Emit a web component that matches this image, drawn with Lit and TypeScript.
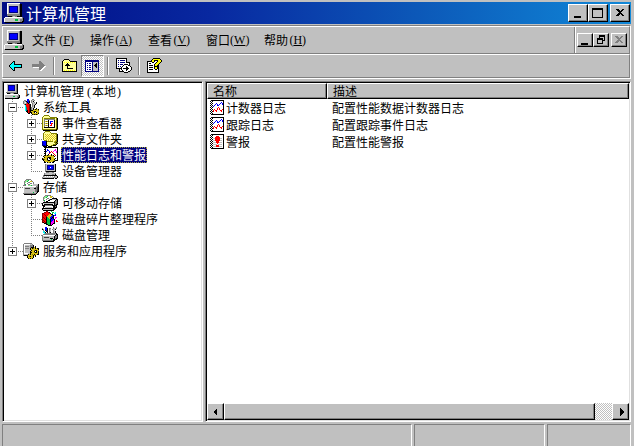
import { LitElement, html, svg, css, nothing } from "lit";
import { customElement } from "lit/decorators.js";
import { classMap } from "lit/directives/class-map.js";

const PALETTE: Record<string, string> = {
  k: "#000000", w: "#ffffff", g: "#808080", l: "#c0c0c0", b: "#0000ff", n: "#000080",
  y: "#ffff00", Y: "#ffff99", o: "#808000", c: "#00ffff", t: "#008080", r: "#ff0000",
  R: "#800000", e: "#00c040", E: "#90e890", m: "#ff00ff", d: "#404040", a: "#d8c018",
};

/* Icons are kept as pixel rows, one palette letter per pixel. */
const ICONS: Record<string, string[]> = {
  computer: [
    "..wwwwwwwwwww...",
    "..wlllllllllgk..",
    "..wlnnnnnnnlgk..",
    "..wlnbbbbbnlgk..",
    "..wlnbbbbbnlgk..",
    "..wlnbbbbbnlgk..",
    "..wlnbbbbbnlgk..",
    "..wlnnnnnnnlgk..",
    "..wlllllllllgk..",
    "..gggggggggggk..",
    "...kkkgllgkkkk..",
    ".wwwwwwwwwwwwwg.",
    "wlllllllllllllgk",
    "wlllllllleellggk",
    "wllllllllllllgkk",
    ".kkkkkkkkkkkkkk.",
  ],
  tools: [
    "....bb...gg.....",
    ".gg.bbg.gllg....",
    "glgkbbk.glk.....",
    "gl.gkbk.gllg.k..",
    "gllgrkg..glllk..",
    ".gkrrrRk.gllk...",
    "..crrrRk.glk....",
    "..crrrRk.glk....",
    "..ctrrRkgllk....",
    "..ctrrRkglk..k..",
    "..ctrrRkglkakoak",
    "..ctkrRkkkaaaaao",
    "...kkrRkaaokkaaa",
    "....krRkkaak.kao",
    ".....kk.kaaaaaak",
    ".........kokoko.",
  ],
  events: [
    "..ooooo.........",
    ".oYYYYYo........",
    "oYYYYYYYooooooo.",
    "oYoooooooooooYok",
    "oYgggggggggggYok",
    "oYgwwwkwwwwwkYok",
    "oYgaoakwbbbwkYok",
    "oYgwwwkwbwwwkYok",
    "oYgaoakwbrrwkYok",
    "oYgwwwkwwrwwkYok",
    "oYgaoakwrrwwkYok",
    "oYgwwwkwwwwwkYok",
    "oYkkkkkkkkkkkYok",
    "oYYYYYYYYYYYYYok",
    "ooooooooooooooko",
    ".kkkkkkkkkkkkkk.",
  ],
  shared: [
    "...ooooo........",
    "..oYYYYYo.......",
    ".oYYYYYYYoooooo.",
    ".oYaYaYaYaYaYaok",
    ".oYYaYaYaYaYaYok",
    ".oYaYaYaYaYaYaok",
    ".oYYaYaYaYaYaYok",
    ".oYaYaYaYaYaYaok",
    ".oYYaYaYaYaYaYok",
    "..oooYaYaYaYYaok",
    "bbbbkooooooYaook",
    "nbbbkYYYYYYYooko",
    "nbbbkYYYYYYYYook",
    "nbbbkYYYYYYoook.",
    "nnnbkkYYYookkk..",
    ".kkkk.kkkk......",
  ],
  perf: [
    "..kkkkkkkkkkkkkk",
    "...kwwwwwwwwwwwk",
    "..kkwbwwwwwwwmwk",
    "...kwbbwwwwwmmwk",
    "..kkbwwbwrwmwwmk",
    "...kwwwbrwrwwwmk",
    "..kkwwwrwwwrwwwk",
    "...kwwkwwkwwrwwk",
    "..kkakoaakakwrwk",
    ".kaaaaaaaaaakwwk",
    "..kaaokkkaaawwwk",
    "kaaaak.kkaaaakwk",
    "kkoaak..kaaakwwk",
    ".kaaaokkaaaaokkk",
    "..kaaaaaaaakk...",
    "..kk.kaok.kk....",
  ],
  device: [
    "...wwwwwwwwwww..",
    "...glllllllllk..",
    "...glnnnnnnnlk..",
    "...glnbbbbbnlk..",
    "...glnbbwbbnlk..",
    "...glnbbbbbnlk..",
    "...glnnnnnnnlk..",
    "...glllllllllk..",
    "...gkkkkkkkkkk..",
    "....ggglllgg....",
    "..gllllllllllg..",
    "..glllllllgglk..",
    ".gkkkkkkkkkkkkk.",
    ".glwlwlwlwlwgllk",
    "gllllllllllggllk",
    "gkkkkkkkkkkk.kk.",
  ],
  storage: [
    "...ggggg........",
    "..gEEewwg.......",
    ".gEEewwaag......",
    ".gEwwggwwwg.....",
    ".gwwgwwggwgwwww.",
    ".gewwggwwwlllllk",
    "gggwwEEEelllllgk",
    "wwwwwwwwwwwwwggk",
    "wlllllllllllggdk",
    "wldddddllllkkgdk",
    "wlllllllllllggdk",
    "wlllllllllllggdk",
    "wlllllllllllggkk",
    "wlllllllllellgk.",
    "gggggggggggggk..",
    ".kkkkkkkkkkkk...",
  ],
  removable: [
    "...gggggg.......",
    "..gEEewwaag.....",
    ".gEEewwwaawg....",
    ".gEwwggwwwkkkkk.",
    ".gwwgwwgkkllllkk",
    ".gewwwkkwwwwwkgk",
    "..gwkkwwwwwwkggk",
    ".kkkkkkkkkkkkggk",
    "klllllllllllkggk",
    "kwkkkkkkkkkwkgkk",
    "kkkgggggggkkkkk.",
    ".kkwwwwwwwwkkgk.",
    ".kwlllllllwkkkk.",
    "kkkkkkkkkkkkkk..",
    "kllllllllllkk...",
    ".kkkkkkkkkkk....",
  ],
  defrag: [
    "....RR...e......",
    "..RRrrRk..ee.c..",
    "RRrrrrrrk.e.cc..",
    "RrRrrrraakk..b..",
    "RrrRrraaaabkbb..",
    "RrrrRaaaabbk....",
    "RRrrkeaabbkk.mm.",
    "RrRrkeeabkbk.m..",
    "RrrRkeeekbbbk...",
    "RRrrkeeekbbmk.r.",
    "RrRrkeeekbmmk.rr",
    "RkrRkeeekmmmk...",
    "..kkkeeekmmkk...",
    "....kkeekmk.....",
    "......kkkk......",
    "................",
  ],
  disk: [
    "...bb......g..g.",
    "g..bbk.gg..gllg.",
    "kg.bbk.gl.gllk..",
    ".g.kbk.gl..gl...",
    ".cg.kk.gl..glk..",
    ".cck.k.gk..glk..",
    "..cgggggggggggk.",
    ".gggggggggggglkk",
    "gwwwwwwwwwwwwkgk",
    "glllllllllllkggk",
    "gldddddlllllkggk",
    "glllllllkkklkgkk",
    "gllllllllelkkkk.",
    "gggggggggggkk...",
    ".kkkkkkkkkkk....",
    "................",
  ],
  services: [
    ".gggggggg.......",
    "gwwwwwwllg......",
    "gwlllllgggk.....",
    "gwgggglgggk.k...",
    "gwlllllgkkkak...",
    "gwgggglkakoakakk",
    "gwlllllkaaaaaaak",
    "gwllllllkaaokkaa",
    "gwlllllkaaak.kak",
    "gwlllllkkaaokkak",
    "gwwwwllkaaaaaaak",
    "gllllkakaoakaakk",
    "gkkkkaaaaakak...",
    "....kaokaak.k...",
    "....kaaaaak.....",
    ".....kakak......",
  ],
  log: [
    ".kkkkkkkkkkkkk..",
    "k.kwwwwwwwwwwk..",
    ".kwwwwwwwwwbwk..",
    "k.kwwwbwwwbwbk..",
    ".kwwwbwbwbwwbk..",
    "k.kwbwwbbwwwwk..",
    ".kwbwwwwwwwwwk..",
    "k.kwwwwwrwwwwk..",
    ".kwwwwwrwrwwwk..",
    "k.kwrwwrwrwwrk..",
    ".kwrwrrwwwrrwk..",
    "k.krwwrwwwwrwk..",
    ".kwwwwwwwwwwwk..",
    "k.kwwwwwwwwwwk..",
    ".kkkkkkkkkkkkk..",
  ],
  alert: [
    ".kkkkkkkkkkkkk..",
    "k.kwwwwwwwwwwk..",
    ".kwwwwrrrwwwwk..",
    "k.kwwrrrrrwwwk..",
    ".kwllrrrrrllwk..",
    "k.kwwrrrrrwwwk..",
    ".kwllrrrrrllwk..",
    "k.kwwwrrrwwwwk..",
    ".kwlllrrrlllwk..",
    "k.kwwwwrwwwwwk..",
    ".kwllllwllllwk..",
    "k.kwwwrrrwwwwk..",
    ".kwlllrrrlllwk..",
    "k.kwwwwwwwwwwk..",
    ".kkkkkkkkkkkkk..",
  ],
  back: [
    "................",
    "................",
    "................",
    ".....kk.........",
    "....kck.........",
    "...kcck.........",
    "..kccckkkkkkkk..",
    ".kccccccccccck..",
    ".kccccccccccck..",
    "..kccckkkkkkkk..",
    "...kcck.........",
    "....kck.........",
    ".....kk.........",
  ],
  forward: [
    "................",
    "................",
    "................",
    "........gg......",
    "........ggg.....",
    "........gggg....",
    ".gggggggggggg...",
    ".ggggggggggggg..",
    ".ggggggggggggww.",
    "..wwwwwwggggww..",
    "........gggww...",
    "........ggww....",
    ".........ww.....",
  ],
  up: [
    "................",
    "..kkkkk.........",
    ".kYYYYYk........",
    "kYYYYYYYkkkkkkk.",
    "kYyYyYyYyYyYyYk.",
    "kYYYYkYYYYYYYYk.",
    "kYYYkkkYYYYYYYk.",
    "kYYkkkkkYYYYYYk.",
    "kYYYYkYYYYYYYYk.",
    "kYYYYkYYYYYYYYk.",
    "kYYYYkkkkkkYYYk.",
    "kYYYYYYYYYYYYYk.",
    "kYyYyYyYyYyYyYk.",
    "kkkkkkkkkkkkkkk.",
  ],
  panel: [
    "................",
    "................",
    "nnnnnnnnnnnnnn..",
    "nnnnnnnnnnnnnn..",
    "nwwwwwwnllllln..",
    "nwnwnnwnlllkln..",
    "nwwwwwwnllkkln..",
    "nwnwnnwnlkkkln..",
    "nwwwwwwnllkkln..",
    "nwnwnnwnlllkln..",
    "nwwwwwwnllllln..",
    "nwnwnnwnllllln..",
    "nwwwwwwnllllln..",
    "nnnnnnnnnnnnnn..",
  ],
  export: [
    "kkkkkkkkkkk.....",
    "kwwwwwwwwwk.....",
    "kwnwnnnnnwk.....",
    "kwwwwwwwwwk.....",
    "kwnwnnnnnwkkkk..",
    "kwwwwwwwwwwwwk..",
    "kwnwnnnwkkkkwk..",
    "kwwwwwwkwwwwkk..",
    "kwnwnwkwwwkwwwk.",
    "kwwwwkwwwwkkwwwk",
    "kkkkkkwkkkkkkwwk",
    "...kwkwwwwkkwwwk",
    "...kwwkwwwkwwwk.",
    "...kkkkkwwwwkk..",
    "........kkkk....",
  ],
  help: [
    "......kkkkkkk...",
    ".....kyyyyyyyk..",
    "....kyykkkkyyyk.",
    "kkkkkyykwwkyyyk.",
    "kwwwwkkwwkyyyk..",
    "kwkkwwwwkyyyk...",
    "kwwwwwwkyyyk....",
    "kwkkkkwkyykk....",
    "kwwwwwwkkkkk....",
    "kwkkkkwkyykk....",
    "kwwwwwwkyykk....",
    "kwkkkkwwkkwk....",
    "kwwwwwwwwwwk....",
    "kwwwwwwwwwwk....",
    "kkkkkkkkkkkk....",
  ],
};

function icon(name: string, cls = "icon") {
  const paths: Record<string, string> = {};
  ICONS[name].forEach((row, y) => {
    [...row].forEach((ch, x) => {
      if (ch !== ".") paths[ch] = (paths[ch] ?? "") + `M${x} ${y}h1v1h-1z`;
    });
  });
  return html`<svg class=${cls} viewBox="0 0 16 16" shape-rendering="crispEdges" aria-hidden="true">
    ${Object.entries(paths).map(([ch, d]) => svg`<path fill=${PALETTE[ch] ?? "none"} d=${d}></path>`)}
  </svg>`;
}

const GLYPHS: Record<string, string> = {
  min: "M2 9h7v2h-7z",
  max: "M0 1h11v10h-11zM1 3v7h9v-7z",
  restore: "M4 1h6v6h-2v3h-6v-6h2zM5 3v1h3v2h1v-3zM3 6v3h4v-3z",
  close: "M2 2h2l2 2l2-2h2l-3 3.500l3 3.500h-2l-2-2l-2 2h-2l3-3.500z",
  left: "M7 2v8l-4-4z",
  right: "M5 2v8l4-4z",
};

function glyph(name: string) {
  return html`<svg class="glyph" viewBox="0 0 12 12" shape-rendering="crispEdges" aria-hidden="true">
    <path fill="currentColor" fill-rule="evenodd" d=${GLYPHS[name]}></path>
  </svg>`;
}

type Guide = "tee" | "end" | "bar" | "none";
interface TreeRow {
  label: unknown;
  icon: string;
  guides: Guide[];
  box?: "plus" | "minus";
  selected?: boolean;
}

const TREE: TreeRow[] = [
  { label: html`计算机管理<span class="open">(</span>本地<span class="shut">)</span>`, icon: "computer", guides: [] },
  { label: "系统工具", icon: "tools", guides: ["tee"], box: "minus" },
  { label: "事件查看器", icon: "events", guides: ["bar", "tee"], box: "plus" },
  { label: "共享文件夹", icon: "shared", guides: ["bar", "tee"], box: "plus" },
  { label: "性能日志和警报", icon: "perf", guides: ["bar", "tee"], box: "plus", selected: true },
  { label: "设备管理器", icon: "device", guides: ["bar", "end"] },
  { label: "存储", icon: "storage", guides: ["tee"], box: "minus" },
  { label: "可移动存储", icon: "removable", guides: ["bar", "tee"], box: "plus" },
  { label: "磁盘碎片整理程序", icon: "defrag", guides: ["bar", "tee"] },
  { label: "磁盘管理", icon: "disk", guides: ["bar", "end"] },
  { label: "服务和应用程序", icon: "services", guides: ["end"], box: "plus" },
];

const MENUS = [["文件", "F"], ["操作", "A"], ["查看", "V"], ["窗口", "W"], ["帮助", "H"]];

const ITEMS = [
  { icon: "log", name: "计数器日志", text: "配置性能数据计数器日志" },
  { icon: "log", name: "跟踪日志", text: "配置跟踪事件日志" },
  { icon: "alert", name: "警报", text: "配置性能警报" },
];

function guide(kind: Guide, box?: "plus" | "minus") {
  const lines: string[] = [];
  if (kind !== "none") lines.push(kind === "end" ? "M8.500 0V8" : "M8.500 0V16");
  if (kind === "tee" || kind === "end") lines.push("M8 8.500H19");
  const art = html`<svg class="guide" viewBox="0 0 19 16" shape-rendering="crispEdges" aria-hidden="true">
    ${lines.map((d) => svg`<path d=${d} stroke="#808080" stroke-dasharray="1 1" fill="none"></path>`)}
    ${box ? svg`<path fill="#808080" d="M4 4h9v9h-9z"></path><path fill="#fff" d="M5 5h7v7h-7z"></path>
      <path fill="#000" d=${box === "plus" ? "M6 8h5v1h-5zM8 6h1v5h-1z" : "M6 8h5v1h-5z"}></path>` : nothing}
  </svg>`;
  return box
    ? html`<button class="expander" aria-label=${box === "plus" ? "展开" : "折叠"}>${art}</button>`
    : art;
}

@customElement("app-root")
export class AppRoot extends LitElement {
  static styles = css`
    :host {
      display: flex;
      flex-direction: column;
      box-sizing: border-box;
      height: 100vh;
      padding: 2px 3px 0 2px;
      overflow: hidden;
      background: #c0c0c0;
      color: #000;
      font: 12px/16px "Noto Sans CJK SC", sans-serif;
      cursor: default;
    }
    * { box-sizing: border-box; }
    button {
      display: flex;
      align-items: center;
      justify-content: center;
      flex: none;
      margin: 0;
      padding: 0;
      border: 0;
      background: none;
      color: inherit;
      font: inherit;
    }
    svg { display: block; flex: none; }
    .icon { width: 16px; height: 16px; }
    .large { width: 20px; height: 20px; }
    .glyph { width: 12px; height: 12px; }

    .titlebar {
      display: flex;
      align-items: center;
      flex: none;
      height: 22px;
      margin-bottom: 1px;
      padding: 0 1px 0 2px;
      background: linear-gradient(to right, #000c84, #0828a0 33%, #0c58b8 66%, #1088d8);
      color: #fff;
    }
    h1 {
      flex: 1;
      margin: 0 0 0 2px;
      font-size: 16px;
      font-weight: 400;
      line-height: 20px;
    }
    .raised {
      border: 1px solid;
      border-color: #fff #000 #000 #fff;
      background: #c0c0c0;
      box-shadow: inset -1px -1px #808080;
      color: #000;
    }
    .caption { width: 20px; height: 18px; }
    .small { width: 16px; height: 14px; }
    .apart { margin-left: 2px; }
    .disabled { color: #808080; }

    .bars {
      flex: none;
      margin-bottom: 2px;
      border-top: 1px solid #808080;
      border-bottom: 1px solid #fff;
      border-right: 1px solid #fff;
    }
    .bar {
      display: flex;
      align-items: center;
      border: 1px solid;
      border-color: #fff #808080 #808080 #fff;
    }
    .menubar { height: 28px; padding-left: 1px; }
    .menus { display: flex; flex: 1; }
    .menu { padding: 0 8px; }
    .key {
      width: 18px;
      font-family: "Liberation Serif", serif;
      text-align: right;
    }
    .mdi {
      display: flex;
      align-items: center;
      align-self: stretch;
      padding: 0 2px;
      border-left: 1px solid #808080;
      box-shadow: inset 1px 0 #fff;
    }
    .toolbar { height: 24px; padding-left: 1px; }
    .tool { width: 23px; height: 22px; }
    .pressed {
      border: 1px solid;
      border-color: #808080 #fff #fff #808080;
      background: repeating-conic-gradient(#fff 0 25%, #c0c0c0 0 50%) 0 0 / 2px 2px;
    }
    .separator {
      width: 2px;
      height: 18px;
      margin: 0 3px;
      border-left: 1px solid #808080;
      border-right: 1px solid #fff;
    }

    .panes {
      display: grid;
      grid-template-columns: 201px minmax(0, 1fr);
      gap: 2px;
      flex: 1;
      min-height: 0;
    }
    .pane {
      display: flex;
      flex-direction: column;
      min-width: 0;
      padding: 1px;
      border: 1px solid;
      border-color: #808080 #fff #fff #808080;
      background: #fff;
      box-shadow: inset 1px 1px #000, inset -1px -1px #e0e0e0;
    }
    ul { margin: 0; list-style: none; }
    .row { display: flex; height: 16px; white-space: nowrap; }
    .guide { width: 19px; height: 16px; }
    .label { margin-left: 3px; padding: 0 1px; }
    .selected { background: #000080; color: #fff; outline: 1px dotted #a0a040; outline-offset: -1px; }
    .open, .shut { display: inline-block; width: 8px; font-family: "Liberation Serif", serif; }
    .open { padding-right: 1px; text-align: right; }
    .shut { padding-left: 1px; }

    .list { flex: 1; min-height: 0; }
    table { width: 100%; border-collapse: separate; border-spacing: 0; table-layout: fixed; }
    .name { width: 120px; }
    th {
      height: 16px;
      padding: 0 5px;
      border: 1px solid;
      border-color: #fff #000 #000 #fff;
      background: #c0c0c0;
      box-shadow: inset -1px -1px #808080;
      font-weight: 400;
      line-height: 14px;
      text-align: left;
    }
    td { height: 17px; padding: 0 5px; white-space: nowrap; }
    .first { padding: 0 0 0 3px; }
    .cell { display: flex; align-items: center; height: 17px; }

    .scroll {
      display: flex;
      flex: none;
      height: 17px;
      background: repeating-conic-gradient(#fff 0 25%, #c0c0c0 0 50%) 0 0 / 2px 2px;
    }
    .arrow { width: 17px; height: 17px; }
    .thumb { flex: 1; margin-right: 17px; }

    .status {
      display: grid;
      grid-template-columns: minmax(0, 1fr) 131px 84px;
      gap: 2px;
      flex: none;
      height: 22px;
      margin-top: 2px;
    }
    .field { border: 1px solid; border-color: #808080 #fff #fff #808080; border-bottom: 0; }
  `;

  render() {
    return html`
      <header class="titlebar">
        ${icon("computer", "large")}
        <h1>计算机管理</h1>
        <button class="raised caption" aria-label="最小化">${glyph("min")}</button>
        <button class="raised caption" aria-label="最大化">${glyph("max")}</button>
        <button class="raised caption apart" aria-label="关闭">${glyph("close")}</button>
      </header>

      <div class="bars">
        <div class="bar menubar">
          ${icon("computer", "large")}
          <nav class="menus">
            ${MENUS.map(([text, key]) => html`<button class="menu">${text}<span class="key">(<u>${key}</u>)</span></button>`)}
          </nav>
          <div class="mdi">
            <button class="raised small" aria-label="最小化窗口">${glyph("min")}</button>
            <button class="raised small" aria-label="还原窗口">${glyph("restore")}</button>
            <button class="raised small apart disabled" aria-label="关闭窗口" disabled>${glyph("close")}</button>
          </div>
        </div>
        <div class="bar toolbar">
          <button class="tool" aria-label="后退">${icon("back")}</button>
          <button class="tool" aria-label="前进">${icon("forward")}</button>
          <span class="separator"></span>
          <button class="tool" aria-label="向上">${icon("up")}</button>
          <button class="tool pressed" aria-label="显示/隐藏控制台树" aria-pressed="true">${icon("panel")}</button>
          <span class="separator"></span>
          <button class="tool" aria-label="导出列表">${icon("export")}</button>
          <span class="separator"></span>
          <button class="tool" aria-label="帮助">${icon("help")}</button>
        </div>
      </div>

      <main class="panes">
        <ul class="pane">
          ${TREE.map((row) => html`
            <li class="row">
              ${row.guides.map((kind, i) => guide(kind, i === row.guides.length - 1 ? row.box : undefined))}
              ${icon(row.icon)}
              <span class=${classMap({ label: true, selected: !!row.selected })}>${row.label}</span>
            </li>`)}
        </ul>
        <section class="pane">
          <div class="list">
            <table>
              <thead>
                <tr><th class="name" scope="col">名称</th><th scope="col">描述</th></tr>
              </thead>
              <tbody>
                ${ITEMS.map((item) => html`
                  <tr>
                    <td class="first"><div class="cell">${icon(item.icon)}${item.name}</div></td>
                    <td>${item.text}</td>
                  </tr>`)}
              </tbody>
            </table>
          </div>
          <div class="scroll">
            <button class="raised arrow" aria-label="向左滚动">${glyph("left")}</button>
            <div class="raised thumb"></div>
            <button class="raised arrow" aria-label="向右滚动">${glyph("right")}</button>
          </div>
        </section>
      </main>

      <footer class="status">
        <div class="field"></div>
        <div class="field"></div>
        <div class="field"></div>
      </footer>
    `;
  }
}
